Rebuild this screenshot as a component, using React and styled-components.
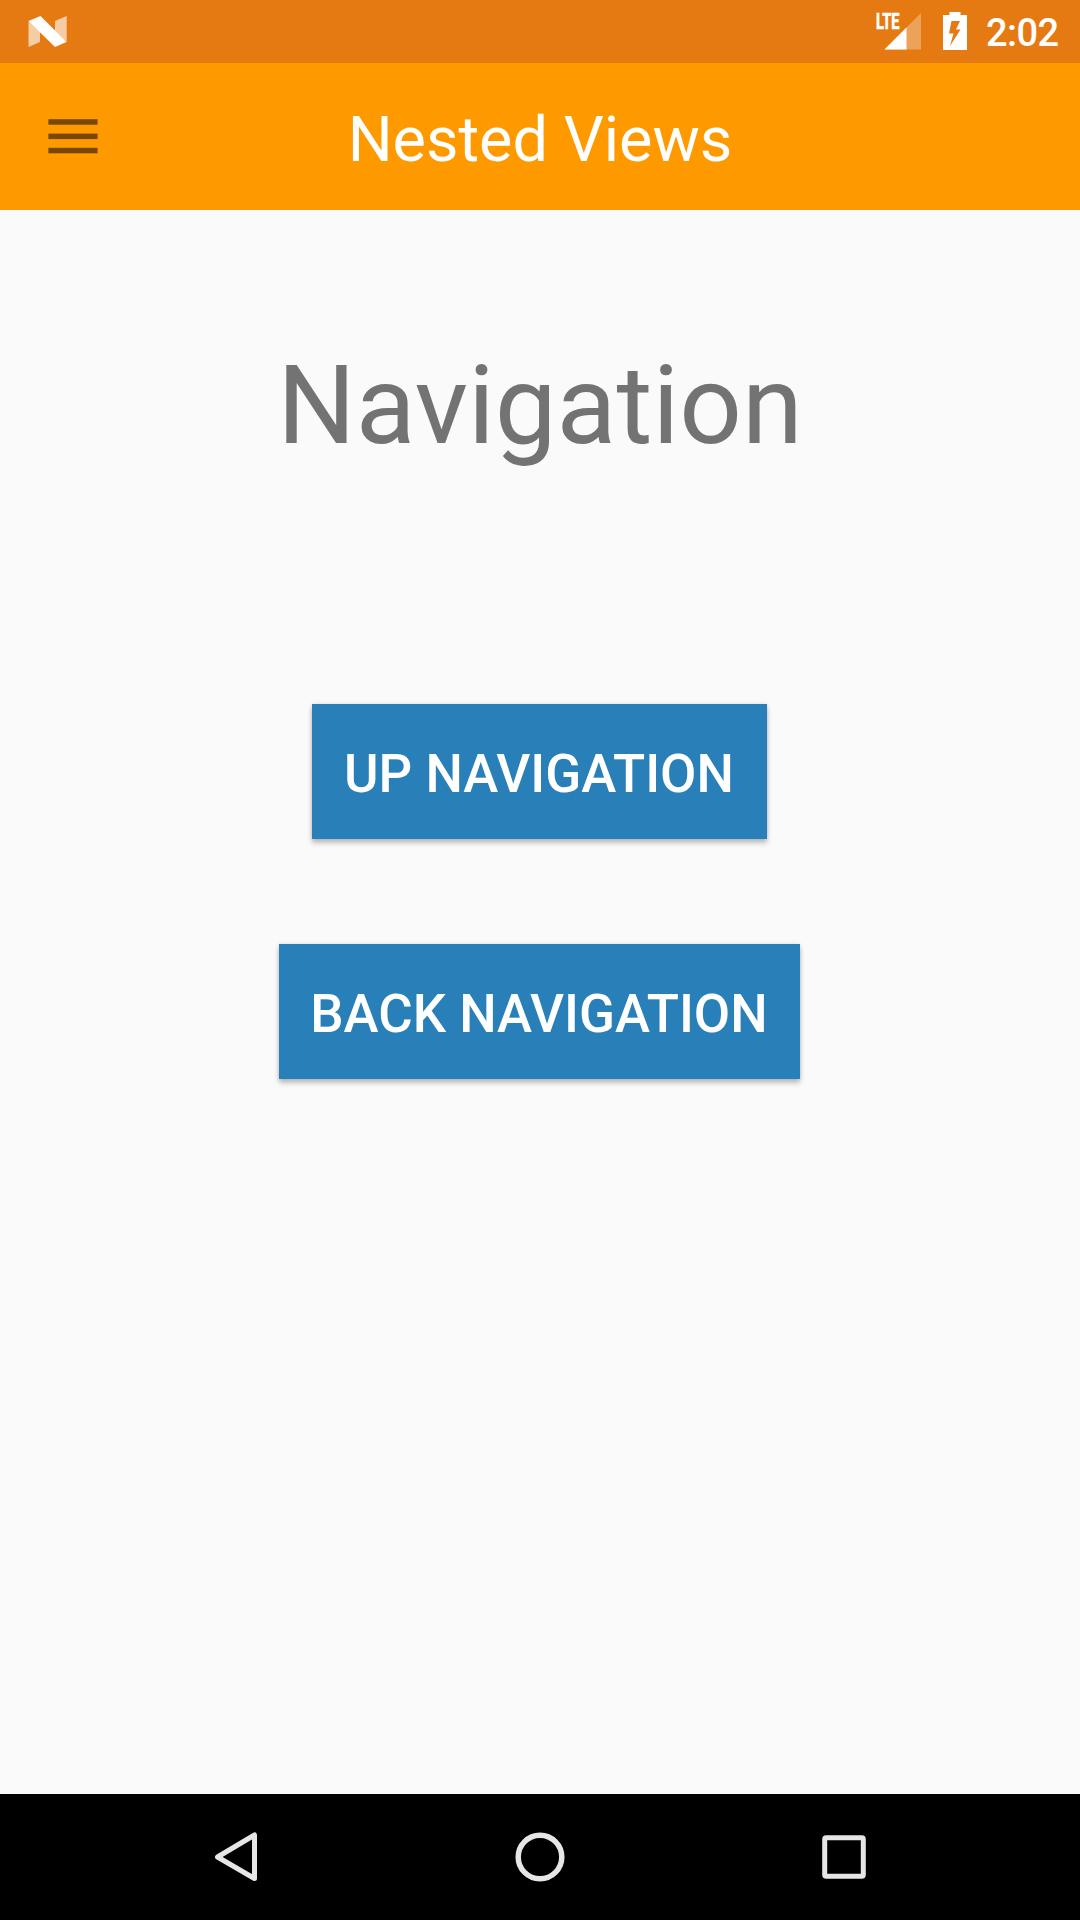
import React from "react";
import styled, { createGlobalStyle } from "styled-components";

const GlobalStyle = createGlobalStyle`
  *, *::before, *::after { box-sizing: border-box; }
  body { margin: 0; background: #fafafa; font-family: Roboto, sans-serif; }
`;

const Screen = styled.div`
  display: flex;
  flex-direction: column;
  width: 1080px;
  height: 1920px;
  overflow: hidden;
  background: #fafafa;
`;

const StatusBar = styled.header`
  display: flex;
  justify-content: space-between;
  flex: none;
  height: 63px;
  padding: 0 20px 0 28px;
  background: #e57a12;
  color: #fff;
`;

const StatusGroup = styled.div`
  display: flex;
  align-items: flex-start;
`;

const NougatIcon = styled.svg`
  display: block;
  width: 40px;
  height: 32px;
  margin-top: 16px;
`;

const Signal = styled.div`
  display: flex;
  align-items: flex-start;
  width: 45px;
  margin: 12px 22px 0 0;
`;

const NetworkType = styled.span`
  width: 8px;
  font-size: 22px;
  font-weight: 700;
  line-height: 20px;
  white-space: nowrap;
  transform: scaleX(0.66);
  transform-origin: 0 0;
  -webkit-text-stroke: 0.7px #fff;
`;

const SignalIcon = styled.svg`
  display: block;
  flex: none;
  width: 37px;
  height: 37px;
  margin-top: 1px;
`;

const BatteryIcon = styled.svg`
  display: block;
  flex: none;
  width: 24px;
  height: 38px;
  margin: 12px 19px 0 0;
`;

const Clock = styled.time`
  width: 74px;
  font-size: 38px;
  font-weight: 500;
  line-height: 66px;
  letter-spacing: -0.6px;
  white-space: nowrap;
`;

const AppBar = styled.div`
  display: grid;
  grid-template-columns: 146px 1fr 146px;
  align-items: center;
  flex: none;
  height: 147px;
  background: #ff9900;
`;

const MenuButton = styled.button`
  display: flex;
  align-items: center;
  justify-content: center;
  padding: 0;
  border: 0;
  background: none;
`;

const MenuIcon = styled.svg`
  display: block;
  width: 50px;
  height: 36px;
  fill: #784800;
`;

const Title = styled.h1`
  margin: 0;
  padding-top: 6px;
  color: #fff;
  font-size: 63px;
  font-weight: 400;
  line-height: 74px;
  text-align: center;
  white-space: nowrap;
`;

const Content = styled.main`
  display: flex;
  flex: 1;
  flex-direction: column;
  align-items: center;
  padding-top: 131px;
`;

const Heading = styled.h2`
  margin: 0 0 233px;
  color: #737373;
  font-size: 110px;
  font-weight: 400;
  line-height: 130px;
`;

const Actions = styled.div`
  display: flex;
  flex-direction: column;
  align-items: center;
  gap: 105px;
  padding-right: 2px;
`;

const ActionButton = styled.button`
  width: ${({ $width }) => $width}px;
  height: 135px;
  padding: 5px 0 0;
  border: 0;
  background: #2980b9;
  box-shadow: 0 4px 5px rgba(0, 0, 0, 0.24), 0 0 4px rgba(0, 0, 0, 0.12);
  color: #fff;
  font-family: inherit;
  font-size: 52.8px;
  font-weight: 500;
  line-height: 62px;
  text-transform: uppercase;
  white-space: nowrap;
`;

const SystemNav = styled.nav`
  display: flex;
  justify-content: center;
  flex: none;
  height: 126px;
  background: #000;
`;

const NavButton = styled.button`
  display: flex;
  align-items: center;
  justify-content: center;
  width: 304px;
  padding: 0;
  border: 0;
  background: none;
`;

const NavIcon = styled.svg`
  display: block;
  width: 72px;
  height: 72px;
  fill: none;
  stroke: #e6e6e6;
`;

export default function App() {
  return (
    <Screen>
      <GlobalStyle />
      <StatusBar>
        <NougatIcon viewBox="0 0 40 32">
          <path d="M.5 5 12 15V26L.5 31ZM27 5 38.7 0V26L27 16Z" fill="#fff" fillOpacity=".62" />
          <path d="M.5 5 12.5 0 38.5 26 27 31Z" fill="#fff" />
        </NougatIcon>
        <StatusGroup>
          <Signal>
            <NetworkType>LTE</NetworkType>
            <SignalIcon viewBox="0 0 37 37">
              <path d="M37 0V36.5H.5Z" fill="#fff" fillOpacity=".3" />
              <path d="M22.5 14.5V36.5H.5Z" fill="#fff" />
            </SignalIcon>
          </Signal>
          <BatteryIcon viewBox="0 0 24 38">
            <path
              d="M6.5 0H17.5V3H24V38H0V3H6.5ZM8.5 9 6 21.5H10.5L7 34 17.5 17.5H13L17 9Z"
              fill="#fff"
              fillRule="evenodd"
            />
          </BatteryIcon>
          <Clock>2:02</Clock>
        </StatusGroup>
      </StatusBar>
      <AppBar>
        <MenuButton aria-label="Menu">
          <MenuIcon viewBox="0 0 50 36">
            <rect x=".4" y=".2" width="49.2" height="5.5" />
            <rect x=".4" y="14.6" width="49.2" height="5.5" />
            <rect x=".4" y="28.8" width="49.2" height="5.5" />
          </MenuIcon>
        </MenuButton>
        <Title>Nested Views</Title>
      </AppBar>
      <Content>
        <Heading>Navigation</Heading>
        <Actions>
          <ActionButton $width={455}>Up Navigation</ActionButton>
          <ActionButton $width={521}>Back Navigation</ActionButton>
        </Actions>
      </Content>
      <SystemNav>
        <NavButton aria-label="Back">
          <NavIcon viewBox="0 0 72 72" strokeWidth="5" strokeLinejoin="round">
            <path d="M54.5 14V57.5L17.5 36Z" />
          </NavIcon>
        </NavButton>
        <NavButton aria-label="Home">
          <NavIcon viewBox="0 0 72 72" strokeWidth="5.5">
            <circle cx="36" cy="36" r="21.8" />
          </NavIcon>
        </NavButton>
        <NavButton aria-label="Recent apps">
          <NavIcon viewBox="0 0 72 72" strokeWidth="5">
            <rect x="16.7" y="16.7" width="38.6" height="38.6" rx="1.5" />
          </NavIcon>
        </NavButton>
      </SystemNav>
    </Screen>
  );
}
